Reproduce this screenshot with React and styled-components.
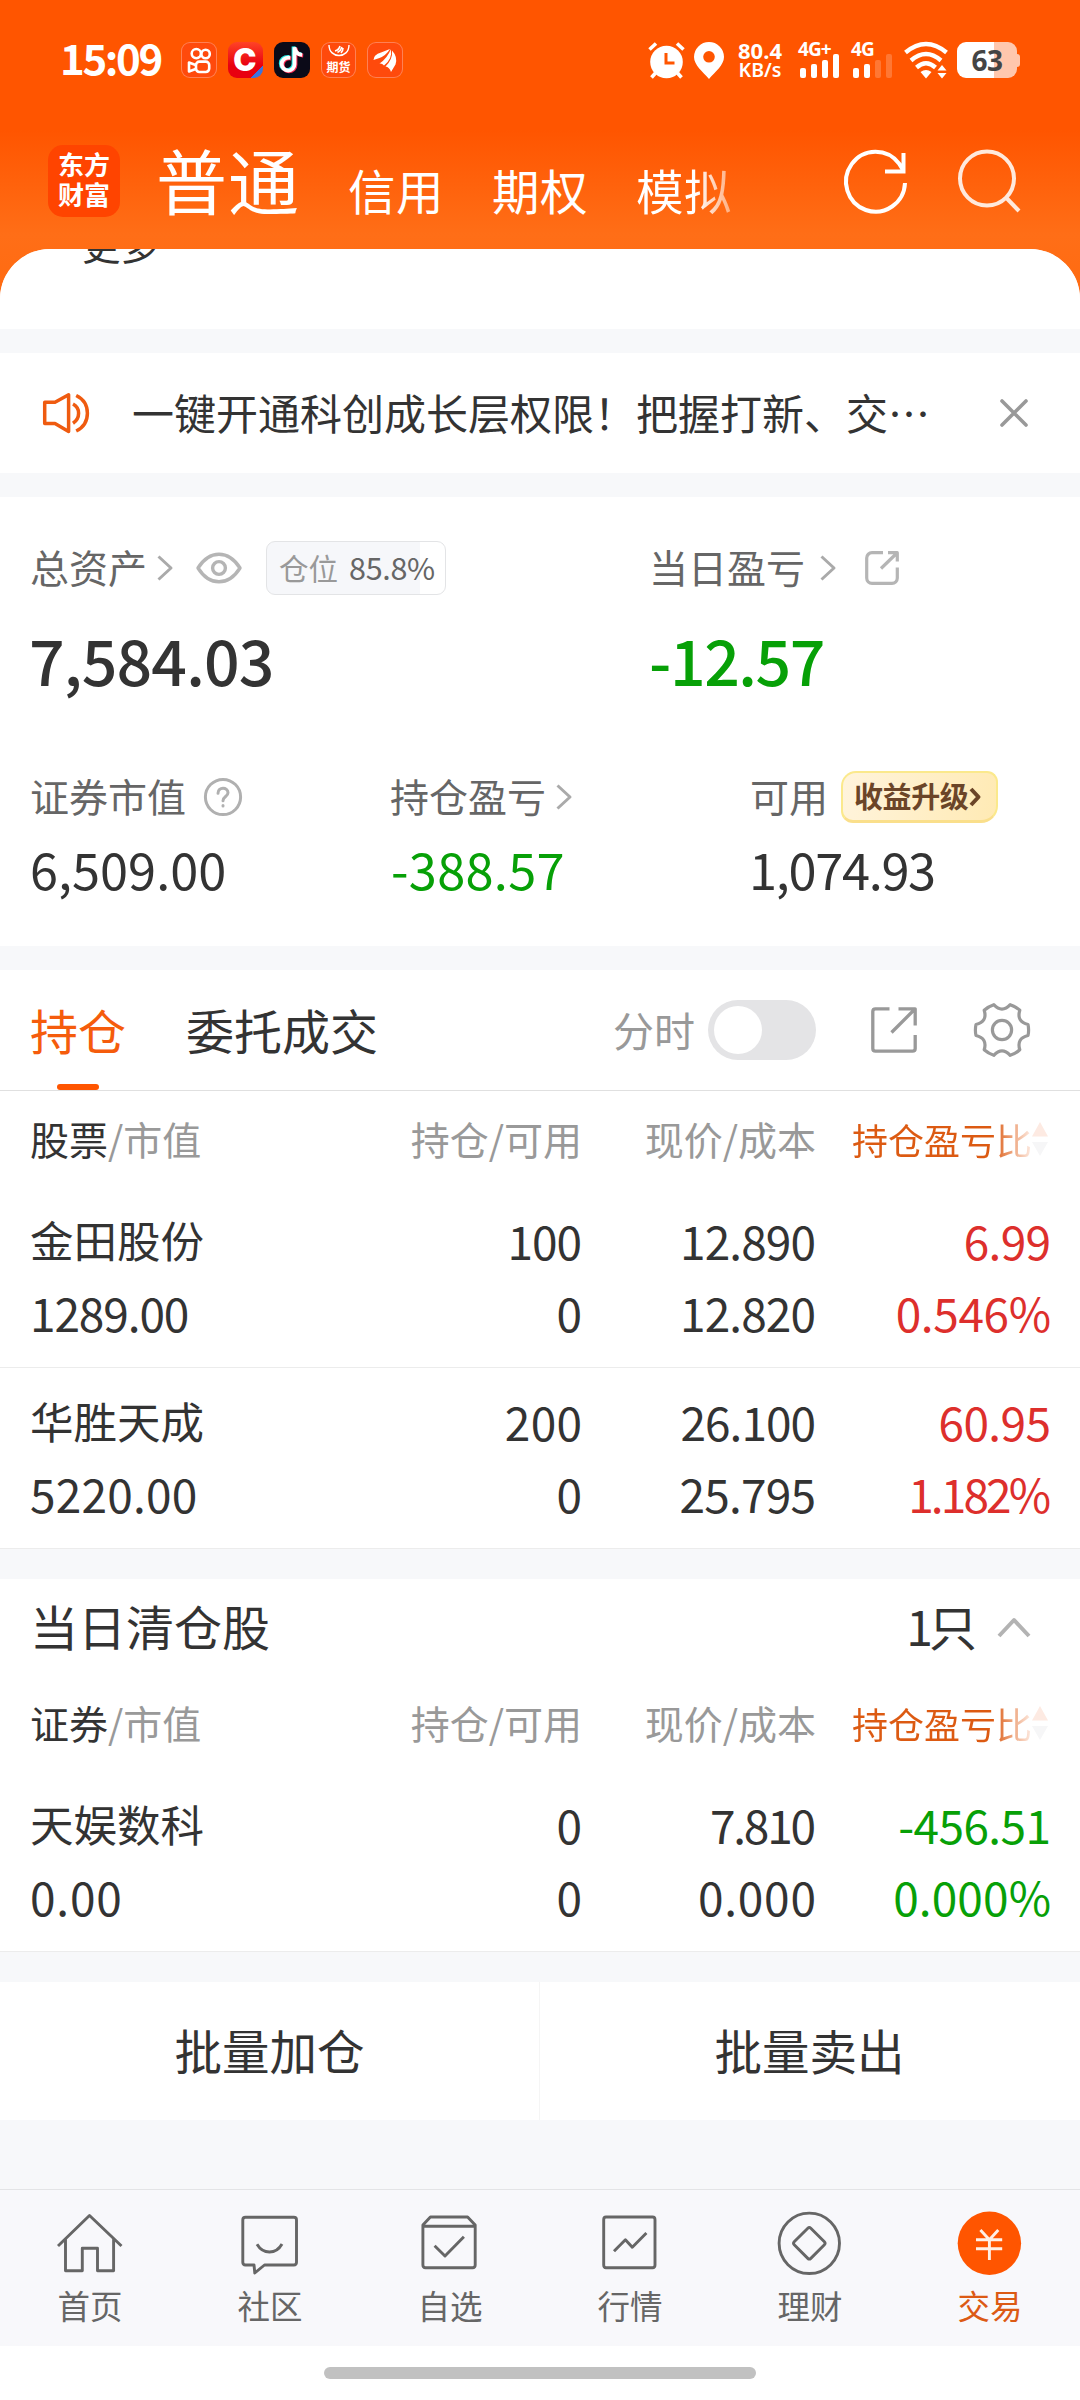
import React from 'react';
import styled, { createGlobalStyle, css } from 'styled-components';

const font = '"Noto Sans CJK SC", "Noto Sans", sans-serif';
const ink = '#333333';
const green = '#07a007';
const red = '#dd2f2c';
const orange = '#ff5500';

const Global = createGlobalStyle`
  *, *::before, *::after { box-sizing: border-box; }
  body { margin: 0; background: #fff; font-family: ${font}; color: ${ink}; }
  svg { display: block; flex: none; overflow: visible; }
`;

const Screen = styled.div`
  width: 1080px;
  height: 2400px;
  overflow: hidden;
  display: flex;
  flex-direction: column;
  background: linear-gradient(180deg, #ff5500 0, #ff5500 130px, #ff6e17 235px, #ff6a10 300px) #f7f8fa;
`;

/* ---------- status bar ---------- */
const StatusBar = styled.div`
  flex: none;
  height: 120px;
  padding: 42px 60px 42px 60px;
  display: flex;
  align-items: center;
  color: #fff;
`;
const Clock = styled.span`
  width: 104px;
  font-size: 42px;
  font-weight: 700;
  line-height: 36px;
  letter-spacing: -2.4px;
  padding-bottom: 7px;
`;
const Apps = styled.div`
  display: flex;
  gap: 11px;
  margin-left: 17px;
`;
const AppTile = styled.div`
  width: 35.6px;
  height: 36px;
  border-radius: 9px;
  background: ${(p) => p.$bg || '#ff4a0c'};
  border: ${(p) => (p.$plain ? '0' : '1px solid rgba(255,255,255,.3)')};
  display: flex;
  flex-direction: column;
  align-items: center;
  justify-content: center;
  overflow: hidden;
`;
const Letter = styled.span`
  font: 900 31px/34px Inter, sans-serif;
  padding-right: 1px;
`;
const CTile = styled(AppTile)`
  background: linear-gradient(135deg, transparent 83%, #3b74e0 83%), linear-gradient(#ff4326, #e80010 65%);
  border: 0;
`;
const TinyLabel = styled.span`
  font-size: 12px;
  font-weight: 700;
  line-height: 18px;
`;
const Signals = styled.div`
  margin-left: auto;
  display: flex;
  align-items: center;
  height: 36px;
`;
const Speed = styled.div`
  display: flex;
  flex-direction: column;
  align-items: center;
  width: 50px;
  margin: 0 13px 0 11px;
  font: 700 22px/20px "Noto Sans", sans-serif;
  white-space: nowrap;
  small { font-size: 19.5px; line-height: 20px; font-weight: 600; }
`;
const Cell = styled.div`
  display: flex;
  flex-direction: column;
  width: 44px;
  margin-right: ${(p) => p.$gap}px;
`;
const CellName = styled.span`
  font: 700 19px/14px "Noto Sans", sans-serif;
  letter-spacing: -0.9px;
  height: 12px;
`;
const Bars = styled.div`
  display: flex;
  align-items: flex-end;
  gap: 5px;
  padding-left: 2px;
  height: 24px;
`;
const Bar = styled.i`
  width: 6px;
  height: ${(p) => p.$h}px;
  border-radius: 2px;
  background: #fff;
  opacity: ${(p) => (p.$off ? 0.2 : 1)};
`;
const BatteryBox = styled.div`
  display: flex;
  align-items: center;
  margin-left: 9px;
`;
const Battery = styled.div`
  width: 60px;
  height: 36px;
  border-radius: 9px;
  background: linear-gradient(90deg, #fff 62%, #ffc7ad 62%);
  color: #444;
  font: 700 28px/36px "Noto Sans", sans-serif;
  letter-spacing: -0.5px;
  text-align: center;
`;
const BatteryTip = styled.i`
  width: 3px;
  height: 13px;
  border-radius: 0 3px 3px 0;
  background: #ffc7ad;
`;

/* ---------- header ---------- */
const Header = styled.header`
  flex: none;
  height: 129px;
  padding: 0 58px 0 48px;
  display: flex;
  color: #fff;
`;
const Logo = styled.div`
  width: 72px;
  height: 72px;
  margin-top: 25px;
  border-radius: 15px;
  background: #ff4400;
  padding: 4px 0 0 10px;
  font-size: 26px;
  font-weight: 700;
  line-height: 30px;
`;
const Accounts = styled.nav`
  display: flex;
  width: 620px;
  margin-left: 37px;
`;
const Account = styled.span`
  font-size: ${(p) => (p.$active ? 71 : 47.5)}px;
  line-height: 80px;
  letter-spacing: ${(p) => (p.$active ? 1 : 0.5)}px;
  margin: ${(p) => (p.$active ? '18px 0 0 -1px' : '30px 0 0 48px')};
  white-space: nowrap;
  ${(p) =>
    p.$fade &&
    css`
      background: linear-gradient(90deg, #fff 62%, rgba(255, 255, 255, 0.45) 100%);
      background-clip: text;
      -webkit-background-clip: text;
      color: transparent;
    `}
`;
const Actions = styled.div`
  margin-left: auto;
  display: flex;
  gap: 45px;
  padding-top: 28px;
`;

/* ---------- sheet ---------- */
const Sheet = styled.main`
  flex: none;
  height: 1940px;
  border-radius: 50px 50px 0 0;
  overflow: hidden;
  background: #f7f8fa;
`;
const MoreStrip = styled.section`
  height: 80px;
  background: #fff;
  overflow: hidden;
  padding-left: 82px;
`;
const MoreText = styled.div`
  margin-top: -26px;
  font-size: 38.5px;
  line-height: 40px;
`;
const Notice = styled.section`
  height: 120px;
  margin-top: 24px;
  background: #fff;
  display: flex;
  align-items: center;
  padding: 0 50px 0 40px;
`;
const NoticeText = styled.span`
  flex: 1;
  margin-left: 40px;
  font-size: 42px;
  line-height: 60px;
  padding-bottom: 2px;
  white-space: nowrap;
`;
const Assets = styled.section`
  height: 449px;
  margin-top: 24px;
  background: #fff;
  padding: 39px 0 0 30px;
`;
const MetricRow = styled.div`
  display: grid;
  grid-template-columns: ${(p) => p.$cols};
  margin-bottom: ${(p) => p.$mb || 0}px;
`;
const Metric = styled.div`
  display: flex;
  flex-direction: column;
`;
const MetricHead = styled.div`
  display: flex;
  align-items: center;
  height: 64px;
`;
const Label = styled.span`
  font-size: 39px;
  line-height: 60px;
  padding-bottom: 4px;
  color: #666;
`;
const Amount = styled.div`
  margin-top: 25px;
  margin-left: ${(p) => p.$dx || 0}px;
  height: 76px;
  font-size: 62.5px;
  line-height: 68px;
  font-weight: 500;
  letter-spacing: ${(p) => p.$ls || 0}px;
  color: ${(p) => p.$color || ink};
`;
const SubAmount = styled(Amount)`
  margin-top: 9px;
  height: 60px;
  font-size: 50.5px;
  line-height: 60px;
  font-weight: 400;
`;
const Position = styled.div`
  width: 180px;
  height: 54px;
  margin-left: 24px;
  border: 1px solid #e3e4e6;
  border-radius: 9px;
  background: linear-gradient(90deg, #f6f7fa 86%, #fff 86%);
  display: flex;
  align-items: center;
  padding: 0 0 3px 12px;
  gap: 11px;
  font-size: 29.5px;
  line-height: 40px;
  color: #999;
  b { font-weight: 400; font-size: 30.5px; color: #666; letter-spacing: -0.3px; }
`;
const Upgrade = styled.div`
  width: 157px;
  height: 52px;
  margin-left: 13px;
  border-radius: 15px 11px 17px 12px;
  border: 2px solid #fbe98c;
  border-bottom: 3px solid #fadf8b;
  background: linear-gradient(100deg, #fff4dc, #ffeab4);
  color: #6b4528;
  display: flex;
  align-items: center;
  padding: 0 0 0 11px;
  span { font-size: 29px; font-weight: 700; line-height: 40px; padding-bottom: 3px; letter-spacing: -0.4px; }
`;

/* ---------- holdings ---------- */
const Holdings = styled.section`
  margin-top: 24px;
  background: #fff;
`;
const TabBar = styled.div`
  height: 121px;
  border-bottom: 1px solid #e0e0e0;
  display: flex;
  align-items: center;
  padding: 0 51px 0 30px;
`;
const Tab = styled.div`
  height: 120px;
  margin-right: 60px;
  display: flex;
  flex-direction: column;
  align-items: center;
  font-size: 48px;
  line-height: 118px;
  color: ${(p) => (p.$active ? '#f55c0c' : ink)};
  &::after {
    content: '';
    margin-top: -4px;
    width: 42px;
    height: 6px;
    border-radius: 3px;
    background: ${(p) => (p.$active ? orange : 'transparent')};
  }
`;
const Tools = styled.div`
  margin-left: auto;
  display: flex;
  align-items: center;
`;
const ToolLabel = styled.span`
  font-size: 41px;
  line-height: 60px;
  padding-bottom: 3px;
  color: #999;
`;
const Switch = styled.div`
  width: 108px;
  height: 60px;
  border-radius: 30px;
  margin: 0 55px 0 13px;
  padding: 6px;
  background: #e4e4e6;
  &::after {
    content: '';
    display: block;
    width: 48px;
    height: 48px;
    border-radius: 50%;
    background: #fff;
  }
`;
const Columns = styled.div`
  display: grid;
  grid-template-columns: 261px 291px 234px 235px;
  padding: 0 29px 0 30px;
`;
const HeadRow = styled(Columns)`
  height: 96px;
  padding-top: 17px;
  font-size: 39px;
  line-height: 60px;
  color: #999;
  white-space: nowrap;
  em { font-style: normal; color: ${ink}; }
  > div { text-align: right; }
  > div:first-child { text-align: left; }
`;
const SortHead = styled.div`
  display: flex;
  align-items: center;
  height: 62px;
  padding-left: 36px;
  font-size: 36px;
`;
const SortText = styled.span`
  background: linear-gradient(90deg, #dc5a12 78%, #fbe0d2 98%);
  background-clip: text;
  -webkit-background-clip: text;
  color: transparent;
`;
const StockRow = styled(Columns)`
  height: 181px;
  padding-top: 17px;
  border-bottom: 1px solid #ececec;
`;
const Cells = styled.div`
  display: flex;
  flex-direction: column;
  align-items: ${(p) => (p.$left ? 'flex-start' : 'flex-end')};
  color: ${(p) => p.$color || ink};
`;
const StockName = styled.span`
  font-size: 43.5px;
  line-height: 72px;
`;
const Num = styled.span`
  font-size: 46px;
  line-height: 72px;
  letter-spacing: ${(p) => p.$ls || 0}px;
  margin-right: ${(p) => -(p.$ls || 0)}px;
`;
const Cleared = styled(Holdings)`
  margin-top: 30px;
`;
const ClearedTitle = styled.div`
  height: 96px;
  display: flex;
  align-items: center;
  padding: 0 48px 4px 30px;
  font-size: 48px;
  line-height: 80px;
  svg { margin-top: 4px; }
`;
const Count = styled.span`
  margin-left: auto;
  margin-right: 23px;
  letter-spacing: -4px;
`;
const Batch = styled.div`
  height: 138px;
  margin-top: 30px;
  background: #fff;
  display: grid;
  grid-template-columns: 1fr 1fr;
`;
const BatchButton = styled.button`
  border: 0;
  border-right: 1px solid ${(p) => (p.$line ? '#f5f5f5' : 'transparent')};
  background: none;
  padding: 0 0 3px;
  font: 400 47.5px/80px ${font};
  color: ${ink};
`;

/* ---------- bottom bar ---------- */
const BottomNav = styled.nav`
  flex: none;
  height: 157px;
  border-top: 1px solid #e3e4e6;
  background: #f8f8fb;
  display: grid;
  grid-template-columns: repeat(6, 1fr);
  padding-top: 20px;
`;
const NavItem = styled.div`
  display: flex;
  flex-direction: column;
  align-items: center;
  font-size: 32.5px;
  line-height: 48px;
  color: ${(p) => (p.$active ? '#dc5a14' : '#666')};
  svg { margin-bottom: 5px; }
`;
const HomeArea = styled.div`
  flex: 1;
  background: #fff;
  display: flex;
  justify-content: center;
  padding-top: 21px;
  &::after { content: ''; width: 432px; height: 12px; border-radius: 6px; background: #c1c1c1; }
`;

/* ---------- icons ---------- */
const Stroke = ({ w, h, s = 3, color = 'currentColor', children, cap = 'butt' }) => (
  <svg width={w} height={h} viewBox={`0 0 ${w} ${h}`} fill="none" stroke={color} strokeWidth={s} strokeLinecap={cap} strokeLinejoin="round">
    {children}
  </svg>
);
const IconSlot = styled.span`
  display: inline-flex;
  margin: 0 ${(p) => p.$r || 0}px 0 ${(p) => p.$l || 0}px;
`;

const Chevron = () => (
  <Stroke w={16} h={26} s={3} color="#aaa"><path d="M1.5 1.5 14 13 1.5 24.5" /></Stroke>
);
const Eye = () => (
  <Stroke w={46} h={32} s={3.4} color="#b5b5b5">
    <path d="M2 16C7 8 14 2.2 23 2.2S39 8 44 16C39 24 32 29.8 23 29.8S7 24 2 16Z" />
    <circle cx="23" cy="16" r="6.4" />
  </Stroke>
);
const ShareSmall = () => (
  <Stroke w={34} h={34} s={3.2} color="#b5b5b5">
    <path d="M18 1.7H7A5.3 5.3 0 0 0 1.7 7V27A5.3 5.3 0 0 0 7 32.3H27A5.3 5.3 0 0 0 32.3 27V16.5M23 1.7H32.3V10.5M32 2 16 17.5" />
  </Stroke>
);
const ShareLarge = () => (
  <Stroke w={46} h={46} s={3.3} color="#999">
    <path d="M18.5 1.8H4.5Q1.8 1.8 1.8 4.5V41.5Q1.8 44.2 4.5 44.2H41.5Q44.2 44.2 44.2 41.5V28M27.5 1.8H44.2V18.5M44 2 20.5 25.5" />
  </Stroke>
);
const gearPath = (() => {
  const at = (r, deg) => {
    const a = (deg * Math.PI) / 180;
    return `${(27 + r * Math.cos(a)).toFixed(2)} ${(27 + r * Math.sin(a)).toFixed(2)}`;
  };
  let d = `M${at(26.6, -12)}`;
  for (let i = 0; i < 6; i += 1) {
    const c = i * 60;
    d += ` Q${at(27.2, c)} ${at(26.6, c + 12)} Q${at(16.5, c + 30)} ${at(26.6, c + 48)}`;
  }
  return `${d}Z`;
})();
const Gear = () => (
  <Stroke w={54} h={54} s={3.2} color="#999"><path d={gearPath} /><circle cx="27" cy="27" r="9.6" /></Stroke>
);
const Speaker = () => (
  <Stroke w={52} h={46} s={3.5} color="#ef5b10">
    <path d="M4.7 12.3H15L28.6 4.8V41.5L15 33.5H4.7Z" />
    <path d="M33 14Q38.6 17 38.6 23.2T33 33.2M36.2 5.5Q47.4 11 47.4 23.2T36.2 41" />
  </Stroke>
);
const Help = () => (
  <Stroke w={40} h={40} s={3} color="#b0b0b0" cap="round">
    <circle cx="20" cy="20" r="17.6" />
    <path d="M15 16.2C15 9.5 25 9.8 25 15.7C25 19.5 20 19.5 20 23.8" />
    <path d="M20 28.6V29" />
  </Stroke>
);

const navItems = [
  ['首页', <path key="i" d="M1 36 32.5 5.5 64.5 36M8.5 29V60.7H25.3V38.3H40.5V60.7H56.6V29" />],
  ['社区', <path key="i" d="M8.5 7.3H56.8Q59.5 7.3 59.5 10V52.3Q59.5 55 56.8 55H27.5L17.8 63 17 55H8.5Q5.8 55 5.8 52.3V10Q5.8 7.3 8.5 7.3ZM20 34.3Q24.5 42 32.5 42T45 34" />],
  ['自选', <path key="i" d="M5.9 16.3H58.2M5.9 16.3V55Q5.9 57.7 8.6 57.7H55.5Q58.2 57.7 58.2 55V15L50.6 7H13.4L5.9 15ZM17.6 35.7 28 46 46.9 26.7" />],
  ['行情', <path key="i" d="M9 7H55.5Q58 7 58 9.7V55Q58 57.7 55.5 57.7H9Q6.7 57.7 6.7 55V9.7Q6.7 7 9 7ZM17 41.3 28.4 29.7 35.3 37.3 49.4 23" />],
  ['理财', <g key="i"><circle cx="32.3" cy="33.3" r="30.2" /><path d="M30.8 18.2Q32.3 16.7 33.8 18.2L47.4 31.8Q48.9 33.3 47.4 34.8L33.8 48.4Q32.3 49.9 30.8 48.4L17.2 34.8Q15.7 33.3 17.2 31.8Z" /></g>],
  ['交易', <g key="i"><circle cx="32.4" cy="33.3" r="31.7" fill={orange} stroke="none" /><path stroke="#fff0e6" d="M23.4 20 32.4 29.7 41.3 20M19 29.7H45.2M19 38.7H45.2M32.4 29.7V50" /></g>],
];

const Wifi = () => (
  <svg width="44" height="37" viewBox="0 0 44 37" fill="none" stroke="#fff" strokeWidth="4.4">
    <path d="M1.5 10.5Q22 -6.5 42.5 10.5M7 18.5Q22 5.5 37 18.5M12.5 25.5Q22 17 31.5 25.5" />
    <path d="M16.5 30Q22 26 27.5 30L22 36.5Z M33.5 28.5 38 23 42.5 28.5ZM33.5 31 38 36.5 42.5 31Z" fill="#fff" stroke="none" />
  </svg>
);

const Note = ({ color, dx, dy }) => (
  <path transform={`translate(${dx} ${dy})`} stroke={color} strokeWidth="3.8" fill="none" d="M16 15.5C10.5 14.8 7.5 18 7.5 21.8S10.500 28.4 14 28.4 20.3 25.5 20.3 22V5C20.8 9.5 23.6 12.3 28 12.6" />
);

const HeadCells = ({ first }) => (
  <HeadRow>
    <div><em>{first}</em>/市值</div>
    <div>持仓/可用</div>
    <div>现价/成本</div>
    <SortHead>
      <SortText>持仓盈亏比</SortText>
      <svg width="16" height="34" viewBox="0 0 16 34"><path d="M0 14.5 8 0 16 14.5Z" fill="#fdeae2" /><path d="M0 20H16L8 34Z" fill="#f6f6f7" /></svg>
    </SortHead>
  </HeadRow>
);

const Stock = ({ s }) => (
  <StockRow>
    <Cells $left><StockName>{s.name}</StockName><Num $ls={s.ls[0]}>{s.value}</Num></Cells>
    <Cells><Num $ls={s.ls[1]}>{s.hold}</Num><Num>{s.avail}</Num></Cells>
    <Cells><Num $ls={s.ls[2]}>{s.price}</Num><Num $ls={s.ls[3]}>{s.cost}</Num></Cells>
    <Cells $color={s.color}><Num $ls={s.ls[4]}>{s.gain}</Num><Num $ls={s.ls[5]}>{s.rate}</Num></Cells>
  </StockRow>
);

const stocks = [
  { name: '金田股份', value: '1289.00', hold: '100', avail: '0', price: '12.890', cost: '12.820', gain: '6.99', rate: '0.546%', color: red, ls: [-1.1, -1, -0.9, -0.9, -0.7, -0.4] },
  { name: '华胜天成', value: '5220.00', hold: '200', avail: '0', price: '26.100', cost: '25.795', gain: '60.95', rate: '1.182%', color: red, ls: [0.2, 0.3, -1, -0.8, -0.6, -2.9] },
];
const cleared = { name: '天娱数科', value: '0.00', hold: '0', avail: '0', price: '7.810', cost: '0.000', gain: '-456.51', rate: '0.000%', color: green, ls: [0.8, 0, -2.2, 0.8, -0.6, 0.1] };

export default function App() {
  return (
    <Screen>
      <Global />
      <StatusBar>
        <Clock>15:09</Clock>
        <Apps>
          <AppTile>
            <Stroke w={26} h={28} s={2.6} color="#fff">
              <circle cx="10.3" cy="7.6" r="4.6" /><circle cx="19.6" cy="8" r="4.2" />
              <rect x="10" y="15.6" width="13.2" height="10.4" rx="3.4" /><path d="M9.6 19 3 16.5V25.5L9.6 23" />
            </Stroke>
          </AppTile>
          <CTile><Letter>C</Letter></CTile>
          <AppTile $bg="#0b0a18" $plain>
            <svg width="36" height="36" viewBox="0 0 36 36"><Note color="#25e8e4" dx={-0.8} dy={-0.5} /><Note color="#fb2c56" dx={1.2} dy={1} /><Note color="#fff" dx={0.2} dy={0.2} /></svg>
          </AppTile>
          <AppTile>
            <Stroke w={24} h={13} s={1.4} color="#fff"><path d="M2 0C2 14 22 14 22 0" /><path d="M8 6Q12 5 13 1M10.5 7.5Q14 5.5 15 2M14 8Q16 6 16 3" strokeWidth="1.6" /></Stroke>
            <TinyLabel>期货</TinyLabel>
          </AppTile>
          <AppTile>
            <svg width="26" height="28" viewBox="0 0 26 28" fill="#fff">
              <path d="M1.500 14Q1.500 8.500 9 6.500L18 3Q14 9.500 7.500 12Q3 13.500 1.500 14ZM7.500 17.500Q15.500 12 18.800 3.200Q20.800 12.500 12 19.500Q10 17 7.500 17.500ZM13.500 20.500Q21 13 20 4.500Q26 11 23.500 18.500L19 26Q17.500 21 13.500 20.500Z" />
            </svg>
          </AppTile>
        </Apps>
        <Signals>
          <svg width="37" height="37" viewBox="0 0 37 37" fill="none" stroke="#fff">
            <circle cx="18.5" cy="20" r="16.3" fill="#fff" stroke="none" />
            <path d="M1.5 7.5 8 1.5M35.5 7.5 29 1.5M7.500 31 3.500 35.500M29.500 31 33.500 35.500" strokeWidth="3.6" />
            <path d="M18 11V21H26.5" stroke={orange} strokeWidth="3" />
          </svg>
          <IconSlot $l={9}>
            <svg width="30" height="37" viewBox="0 0 30 37">
              <path fillRule="evenodd" fill="#fff" d="M15 0A15 15 0 0 1 30 15C30 23 21 30 15 37C9 30 0 23 0 15A15 15 0 0 1 15 0ZM15 9A5.8 5.8 0 1 0 15 20.6A5.8 5.8 0 1 0 15 9Z" />
            </svg>
          </IconSlot>
          <Speed><span>80.4</span><small>KB/s</small></Speed>
          <Cell $gap={9}>
            <CellName>4G+</CellName>
            <Bars><Bar $h={10} /><Bar $h={14} /><Bar $h={18} /><Bar $h={24} /></Bars>
          </Cell>
          <Cell $gap={9}>
            <CellName>4G</CellName>
            <Bars><Bar $h={10} /><Bar $h={14} /><Bar $h={18} $off /><Bar $h={24} $off /></Bars>
          </Cell>
          <Wifi />
          <BatteryBox><Battery>63</Battery><BatteryTip /></BatteryBox>
        </Signals>
      </StatusBar>

      <Header>
        <Logo>东方<br />财富</Logo>
        <Accounts>
          <Account $active>普通</Account>
          <Account>信用</Account>
          <Account>期权</Account>
          <Account $fade>模拟</Account>
        </Accounts>
        <Actions>
          <Stroke w={66} h={66} s={4} color="#fff">
            <path d="M60 35A29.5 30 0 1 1 54 15.5L58 22M58.5 5V23.5H40" strokeLinejoin="miter" />
          </Stroke>
          <Stroke w={66} h={66} s={4} color="#ffe9dc">
            <circle cx="31" cy="30.5" r="27" /><path d="M50 49.5 63 63" />
          </Stroke>
        </Actions>
      </Header>

      <Sheet>
        <MoreStrip><MoreText>更多</MoreText></MoreStrip>
        <Notice>
          <Speaker />
          <NoticeText>一键开通科创成长层权限！把握打新、交…</NoticeText>
          <Stroke w={32} h={32} s={3.6} color="#999" cap="round"><path d="M4 4 28 28M28 4 4 28" /></Stroke>
        </Notice>

        <Assets>
          <MetricRow $cols="619px 1fr" $mb={64}>
            <Metric>
              <MetricHead>
                <Label>总资产</Label>
                <IconSlot $l={10} $r={23}><Chevron /></IconSlot>
                <Eye />
                <Position><span>仓位</span><b>85.8%</b></Position>
              </MetricHead>
              <Amount $dx={-1} $ls={-0.8}>7,584.03</Amount>
            </Metric>
            <Metric>
              <MetricHead>
                <Label>当日盈亏</Label>
                <IconSlot $l={15} $r={29}><Chevron /></IconSlot>
                <ShareSmall />
              </MetricHead>
              <Amount $color={green} $dx={0} $ls={-1.4}>-12.57</Amount>
            </Metric>
          </MetricRow>
          <MetricRow $cols="360px 360px 1fr">
            <Metric>
              <MetricHead><Label>证券市值</Label><IconSlot $l={17}><Help /></IconSlot></MetricHead>
              <SubAmount>6,509.00</SubAmount>
            </Metric>
            <Metric>
              <MetricHead><Label>持仓盈亏</Label><IconSlot $l={10}><Chevron /></IconSlot></MetricHead>
              <SubAmount $color={green} $dx={1} $ls={0.3}>-388.57</SubAmount>
            </Metric>
            <Metric>
              <MetricHead>
                <Label>可用</Label>
                <Upgrade><span>收益升级</span><Stroke w={14} h={22} s={4}><path d="M3 3 10.5 11 3 19" /></Stroke></Upgrade>
              </MetricHead>
              <SubAmount $dx={-1} $ls={-1.3}>1,074.93</SubAmount>
            </Metric>
          </MetricRow>
        </Assets>

        <Holdings>
          <TabBar>
            <Tab $active>持仓</Tab>
            <Tab>委托成交</Tab>
            <Tools>
              <ToolLabel>分时</ToolLabel>
              <Switch />
              <ShareLarge />
              <IconSlot $l={58}><Gear /></IconSlot>
            </Tools>
          </TabBar>
          <HeadCells first="股票" />
          {stocks.map((s) => <Stock key={s.name} s={s} />)}
        </Holdings>

        <Cleared>
          <ClearedTitle>
            当日清仓股
            <Count>1只</Count>
            <Stroke w={36} h={22} s={4} color="#b3b3b3"><path d="M3 20 18 4 33 20" /></Stroke>
          </ClearedTitle>
          <HeadCells first="证券" />
          <Stock s={cleared} />
        </Cleared>

        <Batch>
          <BatchButton $line>批量加仓</BatchButton>
          <BatchButton>批量卖出</BatchButton>
        </Batch>
      </Sheet>

      <BottomNav>
        {navItems.map(([label, icon], i) => (
          <NavItem key={label} $active={i === 5}>
            <Stroke w={66} h={66} s={2.9}>{icon}</Stroke>
            {label}
          </NavItem>
        ))}
      </BottomNav>
      <HomeArea />
    </Screen>
  );
}
